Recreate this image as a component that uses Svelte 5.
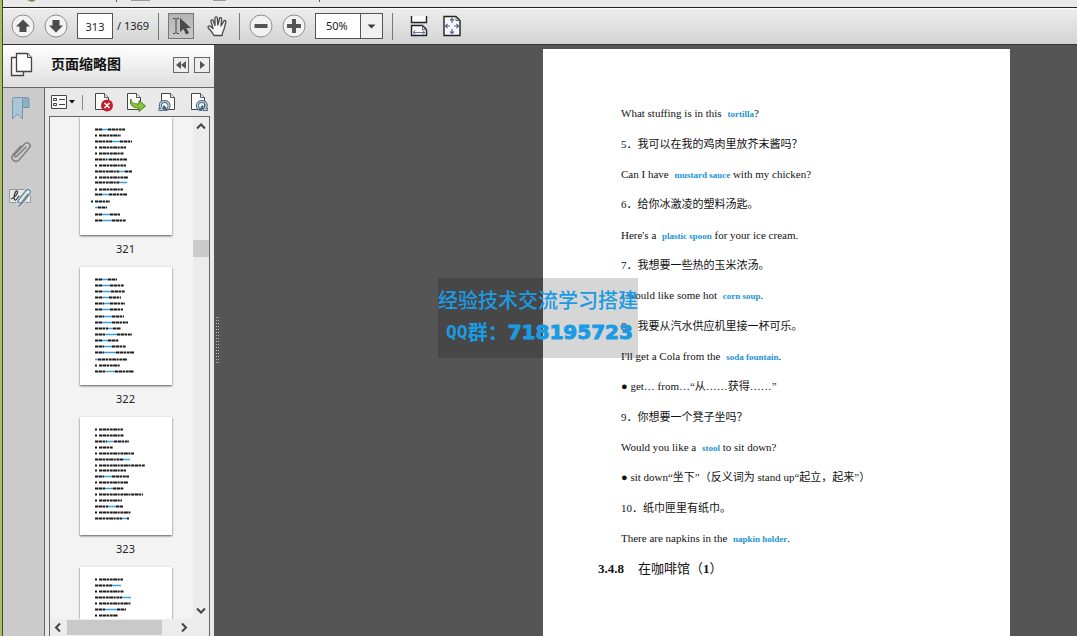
<script>
  const pages = [
    {
      number: 321,
      rows: [
        [12, 15, 22, 28, 45], [18, 15, 0, 0, 41], [24, 15, 32, 40, 52], [30, 15, 0, 0, 46],
        [36, 15, 0, 0, 44], [42, 15, 27, 29, 47], [48, 15, 0, 0, 46], [54, 15, 39, 45, 52],
        [60, 15, 0, 0, 48], [65, 15, 40, 47, 47], [72, 15, 0, 0, 43], [77, 15, 22, 29, 47],
        [84, 11, 0, 0, 30], [90, 15, 15, 18, 27], [97, 15, 22, 30, 40], [103, 15, 22, 32, 46]
      ]
    },
    {
      number: 322,
      rows: [
        [12, 15, 22, 28, 37], [18, 15, 22, 30, 44], [24, 15, 22, 31, 45], [30, 15, 23, 29, 41],
        [36, 15, 24, 30, 45], [42, 15, 22, 30, 43], [49, 15, 24, 32, 44], [55, 15, 22, 32, 48],
        [61, 15, 28, 33, 41], [67, 15, 26, 37, 52], [73, 15, 22, 28, 39], [79, 15, 24, 32, 46],
        [85, 15, 24, 36, 54], [92, 15, 15, 18, 47], [98, 15, 0, 0, 40], [104, 15, 26, 35, 54]
      ]
    },
    {
      number: 323,
      rows: [
        [12, 15, 0, 0, 43], [18, 15, 0, 0, 44], [24, 15, 27, 34, 49], [30, 15, 0, 0, 33],
        [36, 15, 0, 0, 54], [42, 15, 43, 50, 50], [48, 15, 0, 0, 65], [53, 15, 0, 0, 46],
        [59, 15, 24, 32, 49], [65, 15, 0, 0, 48], [71, 15, 25, 33, 44], [77, 15, 0, 0, 63],
        [83, 15, 0, 0, 42], [89, 15, 28, 36, 43], [95, 15, 0, 0, 51], [101, 15, 42, 47, 49]
      ]
    },
    {
      rows: [
        [12, 15, 0, 0, 43], [18, 15, 32, 41, 41], [24, 15, 0, 0, 44], [30, 15, 42, 51, 51],
        [36, 15, 0, 0, 51], [42, 15, 25, 37, 46], [48, 15, 0, 0, 38]
      ]
    }
  ];

  const lines = [
    { a: 'What stuffing is in this ', term: 'tortilla', b: '?' },
    { a: '5．我可以在我的鸡肉里放芥末酱吗？' },
    { a: 'Can I have ', term: 'mustard sauce', b: ' with my chicken?' },
    { a: '6．给你冰激凌的塑料汤匙。' },
    { a: "Here's a ", term: 'plastic spoon', b: ' for your ice cream.' },
    { a: '7．我想要一些热的玉米浓汤。' },
    { a: 'I would like some hot ', term: 'corn soup', b: '.' },
    { a: '8．我要从汽水供应机里接一杯可乐。' },
    { a: "I'll get a Cola from the ", term: 'soda fountain', b: '.' },
    { a: '● get… from…“从……获得……”' },
    { a: '9．你想要一个凳子坐吗？' },
    { a: 'Would you like a ', term: 'stool', b: ' to sit down?' },
    { a: '● sit down“坐下”（反义词为 stand up“起立，起来”）' },
    { a: '10．纸巾匣里有纸巾。' },
    { a: 'There are napkins in the ', term: 'napkin holder', b: '.' }
  ];

  let page = $state('313');
  let zoom = $state('50%');
</script>

{#snippet sheet()}
  <path d="M2.500 1.500h9l4 4v12h-13z" fill="#fdfdfd" stroke="#444" />
  <path d="M11.500 1.500v4h4" fill="#e8e8e8" stroke="#555" />
{/snippet}

<div class="app">
  <div class="strip">
    <svg width="360" height="7" aria-hidden="true">
      <path d="M24 0h9l-4 2z" fill="#8a7a55" />
      <path d="M113.500 0v2M316.500 0v2" stroke="#555" />
      <path d="M128 0h19M210 0h13" stroke="#999" stroke-width="2" />
    </svg>
  </div>

  <header class="toolbar">
    <button aria-label="Previous page">
      <svg width="24" height="24" viewBox="0 0 24 24">
        <circle cx="12" cy="12" r="11" fill="#f2f2f2" stroke="#8d8d8d" />
        <path d="M12 5.500l7 7h-3.500v5.500h-7v-5.500H5z" fill="#4b4b4b" />
      </svg>
    </button>
    <button aria-label="Next page">
      <svg width="24" height="24" viewBox="0 0 24 24">
        <circle cx="12" cy="12" r="11" fill="#f2f2f2" stroke="#8d8d8d" />
        <path d="M12 18.500l7-7h-3.500V6h-7v5.500H5z" fill="#4b4b4b" />
      </svg>
    </button>
    <label class="page-no"><input aria-label="Page number" bind:value={page} /><span>/ 1369</span></label>
    <i class="sep"></i>
    <button class="active" aria-label="Select">
      <svg width="24" height="24" viewBox="0 0 24 24">
        <path d="M4 4.500h2l1 1 1-1h2M7 5v14M4 19.500h2l1-1 1 1h2" fill="none" stroke="#444" />
        <path d="M11 4v14l3.500-3 2.500 5.500 3-1.500-2.500-5H22z" fill="#4a4a4a" />
      </svg>
    </button>
    <button class="tool" aria-label="Hand">
      <svg width="24" height="24" viewBox="0 0 24 24">
        <path d="M9 21.500C7.500 18 5 16 3.300 14c-1-1.500.7-2.700 2-1.700L8 14.500 6 7.500c-.4-1.800 1.700-2.300 2.200-.7L10 11.500V4.200c0-1.700 2.200-1.700 2.300 0l.5 7L14.500 4.500c.4-1.500 2.300-1.100 2.100.5L16 12l2.800-4.800c.8-1.300 2.500-.4 2 1C19.500 12 20 14 18 17.500c-.7 1.400-.8 2.500-.8 4z" fill="#f6f6f6" stroke="#4a4a4a" stroke-width="1.300" stroke-linejoin="round" />
      </svg>
    </button>
    <i class="sep"></i>
    <button aria-label="Zoom out">
      <svg width="24" height="24" viewBox="0 0 24 24">
        <circle cx="12" cy="12" r="11" fill="#f2f2f2" stroke="#8d8d8d" />
        <path d="M5.500 10h13v4h-13z" fill="#555" />
      </svg>
    </button>
    <button aria-label="Zoom in">
      <svg width="24" height="24" viewBox="0 0 24 24">
        <circle cx="12" cy="12" r="11" fill="#f2f2f2" stroke="#8d8d8d" />
        <path d="M10 5h4v5h5v4h-5v5h-4v-5H5v-4h5z" fill="#555" />
      </svg>
    </button>
    <div class="zoom">
      <select aria-label="Zoom level" bind:value={zoom}>
        <option>50%</option>
        <option>100%</option>
      </select>
      <svg width="22" height="24" viewBox="0 0 22 24" aria-hidden="true">
        <path d="M0 0h22v24H0z" fill="#f1f1f1" />
        <path d="M.5 0v24" stroke="#555" />
        <path d="M7.500 10.500h8l-4 4z" fill="#3c3c3c" />
      </svg>
    </div>
    <i class="sep"></i>
    <div class="pair">
      <button class="wide" aria-label="Fit width">
        <svg width="20" height="22" viewBox="0 0 20 22">
          <path d="M2.500 1v6.500h15V1" fill="#fafafa" stroke="#222" stroke-width="1.400" />
          <path d="M2.500 20.500v-10h11l4 4v6z" fill="#f5f7fb" stroke="#222" stroke-width="1.400" />
          <path d="M13.500 10.500v4h4" fill="none" stroke="#666" />
          <path d="M4 17.500h12M6.500 15.500l-2.500 2 2.500 2M13.500 15.500l2.500 2-2.500 2" fill="none" stroke="#6d7595" />
        </svg>
      </button>
      <button class="wide" aria-label="Fit page">
        <svg width="20" height="22" viewBox="0 0 20 22">
          <path d="M2 1.500h12l4 4v15H2z" fill="#f5f7fb" stroke="#222" stroke-width="1.400" />
          <path d="M14 1.500v4h4" fill="none" stroke="#666" />
          <path d="M10 4v4M10 14v4M4 11h4M12 11h4M8 5.500l2-2 2 2M8 16.500l2 2 2-2M5.500 9l-2 2 2 2M14.500 9l2 2-2 2" fill="none" stroke="#59658f" stroke-width="1.200" />
        </svg>
      </button>
    </div>
  </header>

  <div class="main">
    <aside>
      <div class="panel-head">
        <svg width="24" height="26" viewBox="0 0 24 26" aria-hidden="true">
          <path d="M1.500 5.500h12v18h-12z" fill="#f6f6f6" stroke="#444" stroke-width="1.300" />
          <path d="M6.500 1.500h11l4 4v14h-15z" fill="#fff" stroke="#444" stroke-width="1.300" />
          <path d="M17.500 1.500v4h4" fill="#ddd" stroke="#444" />
        </svg>
        <h2>页面缩略图</h2>
        <button class="box" aria-label="Collapse">
          <svg width="14" height="14" viewBox="0 0 14 14"><path d="M7 3v8L2 7zM12 3v8L7 7z" fill="#555" /></svg>
        </button>
        <button class="box" aria-label="Expand">
          <svg width="14" height="14" viewBox="0 0 14 14"><path d="M5 3v8l5-4z" fill="#555" /></svg>
        </button>
      </div>
      <div class="panel-body">
        <nav>
          <button aria-label="Bookmarks">
            <svg width="24" height="26" viewBox="0 0 24 26">
              <path d="M13 2.500h5.500c1 0 1.500 1 1.500 2v8h-6" fill="#8fb0c4" stroke="#6f93aa" />
              <path d="M3.500 24V4c0-1 .6-1.500 1.500-1.500h10c-1 0-1.500 1-1.500 2V24l-5-5z" fill="#a9c6d8" stroke="#7396ab" />
            </svg>
          </button>
          <button aria-label="Attachments">
            <svg width="24" height="26" viewBox="0 0 24 26">
              <path d="M17 8l-9 9c-1.500 1.700-3.500.2-2.200-1.500L15.500 5c3-3 7.500.3 4.700 4L10.500 20.500c-4 4.500-10-.3-6.300-5L12 7" fill="none" stroke="#808080" stroke-width="1.500" stroke-linecap="round" />
            </svg>
          </button>
          <button aria-label="Signatures">
            <svg width="26" height="26" viewBox="0 0 26 26">
              <path d="M1.500 6.500h21v13h-21z" fill="#e4e8eb" stroke="#999" />
              <path d="M3 16c4-1 8-7 6-8s-4 8-2 9 3-4 4-4 0 3 2 2" fill="none" stroke="#333" stroke-width="1.200" />
              <path d="M20 11l-6 8c-2 2.500-5 .5-3.500-2L18 7.500c2-2.500 6 0 4.300 2.500l-7 9c-1.500 2-3.500 4-5.300 4.500" fill="none" stroke="#e8f0f5" stroke-width="3" />
              <path d="M20 11l-6 8c-2 2.500-5 .5-3.500-2L18 7.500c2-2.500 6 0 4.300 2.500l-7 9c-1.500 2-3.500 4-5.300 4.500" fill="none" stroke="#748997" stroke-width="1.500" />
            </svg>
          </button>
        </nav>
        <section>
          <div class="tools">
            <div class="options">
              <button aria-label="Options">
                <svg width="26" height="20" viewBox="0 0 26 20">
                  <path d="M2.500 3.500h15v13h-15z" fill="#fafafa" stroke="#444" />
                  <path d="M4.500 6.500h3v2h-3zM4.500 11.500h3v2h-3zM10 7.500h6M10 12.500h6" fill="none" stroke="#444" />
                  <path d="M20 8h6l-3 3.500z" fill="#111" />
                </svg>
              </button>
              <i class="sep small"></i>
            </div>
            <button aria-label="Delete page">
              <svg width="22" height="20" viewBox="0 0 22 20">
                {@render sheet()}
                <circle cx="14" cy="13.500" r="6" fill="#c4202b" />
                <path d="M11.500 11l5 5M16.500 11l-5 5" stroke="#fff" stroke-width="1.600" />
              </svg>
            </button>
            <button aria-label="Extract page">
              <svg width="22" height="20" viewBox="0 0 22 20">
                {@render sheet()}
                <path d="M6 7c0 4 3 5 8 5V8.500l6.500 5.500-6.500 5.500V16C8 16 4 13 6 7z" fill="#8cc63e" stroke="#4d7f1c" />
              </svg>
            </button>
            <button aria-label="Rotate left">
              <svg width="22" height="20" viewBox="0 0 22 20">
                <g transform="translate(2 0)">{@render sheet()}</g>
                <path d="M1.500 17.500h5M5 17.500c-3-3-2-8 2.500-8s6 5 3 7.500c-2.500 1.500-4.500-1-2.500-3" fill="none" stroke="#49677f" stroke-width="3" />
                <path d="M2 17.500h4M5 17c-3-3-2-7.500 2.500-7.500s6 5 3 7.500" fill="none" stroke="#c0d3e0" stroke-width="1.200" />
              </svg>
            </button>
            <button aria-label="Rotate right">
              <svg width="22" height="20" viewBox="0 0 22 20">
                {@render sheet()}
                <path d="M19 17.500h-5M15.500 17.500c3-3 2-8-2.500-8s-6 5-3 7.500c2.500 1.500 4.500-1 2.500-3" fill="none" stroke="#49677f" stroke-width="3" />
                <path d="M18.500 17.500h-4M15.500 17c3-3 2-7.500-2.500-7.500s-6 5-3 7.500" fill="none" stroke="#c0d3e0" stroke-width="1.200" />
              </svg>
            </button>
          </div>
          <div class="list">
            <div class="rows">
              <ol class="thumbs">
                {#each pages as p}
                  <li>
                    <svg width="92" height="118" viewBox="0 0 92 118" aria-hidden="true">
                      {#each p.rows as [y, x0, b0, b1, x1]}
                        {#if b1}
                          <path class="ink" d="M{x0} {y}.500H{b0}M{b1} {y}.500H{x1}" />
                          <path class="blue" d="M{b0} {y}.500H{b1}" />
                        {:else}
                          <path class="ink" d="M{x0} {y}.500h2M{x0 + 4} {y}.500H{x1}" />
                        {/if}
                      {/each}
                    </svg>
                    {#if p.number}<span>{p.number}</span>{/if}
                  </li>
                {/each}
              </ol>
              <div class="vbar">
                <svg width="16" height="18" viewBox="0 0 16 18"><path d="M4 11.500l4-4 4 4" /></svg>
                <i class="before"></i><i class="grab"></i><i class="after"></i>
                <svg width="16" height="18" viewBox="0 0 16 18"><path d="M4 7.500l4 4 4-4" /></svg>
              </div>
            </div>
            <div class="hbar">
              <svg width="17" height="16" viewBox="0 0 17 16"><path d="M10 4.500l-4 4 4 4" /></svg>
              <i class="grab"></i>
              <svg width="17" height="16" viewBox="0 0 17 16"><path d="M6 4.500l4 4-4 4" /></svg>
            </div>
          </div>
        </section>
      </div>
    </aside>

    <main>
      <i class="grip"></i>
      <article>
        <div class="text">
          {#each lines as l}
            <p>{l.a}{#if l.term}<b>{l.term}</b>{l.b}{/if}</p>
          {/each}
        </div>
        <h3><strong>3.4.8</strong><span>在咖啡馆（<strong>1</strong>）</span></h3>
      </article>
    </main>
  </div>

  <div class="mark">
    <div class="kai">经验技术交流学习搭建</div>
    <div class="qq"><span class="latin">QQ</span>群：<strong>718195723</strong></div>
  </div>
</div>

<style>
  :global(body) { margin: 0; }
  * { box-sizing: border-box; }
  .app {
    position: relative;
    display: flex;
    flex-direction: column;
    height: 100vh;
    overflow: hidden;
    border-left: 2px solid #a3c257;
    box-shadow: inset 1px 0 #444;
    padding-left: 1px;
    background: #555;
    font: 11px/16px "Noto Sans", "Noto Sans CJK SC", sans-serif;
    color: #222;
  }
  svg { display: block; }
  button {
    display: grid;
    place-items: center;
    padding: 0;
    border: 0;
    background: none;
  }
  .strip {
    flex: none;
    height: 8px;
    background: #e9e9e9;
    border-bottom: 1px solid #222;
  }
  .toolbar {
    flex: none;
    display: flex;
    align-items: center;
    gap: 9px;
    height: 37px;
    padding: 0 8px 1px;
    background: linear-gradient(#ececec, #d4d4d4);
    border-top: 1px solid #fafafa;
    border-bottom: 1px solid #333;
  }
  .sep { width: 1px; height: 27px; background: #777; }
  .page-no { display: flex; align-items: center; gap: 4px; width: 72px; white-space: nowrap; }
  .page-no input {
    width: 36px;
    height: 26px;
    padding: 0;
    border: 1px solid #555;
    background: #fff;
    font: inherit;
    color: inherit;
    text-align: center;
  }
  .active { width: 26px; height: 26px; border: 1px solid #777; background: linear-gradient(#b4b4b4, #c8c8c8); }
  .tool { width: 27px; height: 26px; }
  .zoom {
    display: grid;
    width: 68px;
    height: 26px;
    border: 1px solid #555;
    background: #fff;
  }
  .zoom > * { grid-area: 1 / 1; }
  .zoom select {
    appearance: none;
    padding: 0 0 0 10px;
    border: 0;
    background: none;
    font: inherit;
    color: inherit;
  }
  .zoom svg { justify-self: end; pointer-events: none; }
  .pair { display: flex; }
  .wide { width: 33px; height: 26px; }

  .main { flex: 1; min-height: 0; display: flex; }
  aside { width: 211px; flex: none; display: flex; flex-direction: column; background: #e9e9e9; }
  .panel-head {
    flex: none;
    display: flex;
    align-items: center;
    gap: 5px;
    height: 43px;
    padding: 0 4px 2px 7px;
    background: linear-gradient(#fff, #dedede);
    border-bottom: 1px solid #666;
  }
  h2 {
    flex: 1;
    margin: 0;
    padding: 0 0 4px 12px;
    font: bold 14px/20px "Noto Sans CJK SC", sans-serif;
    color: #111;
  }
  .box { width: 16px; height: 16px; border: 1px solid #666; background: #eee; }
  .panel-body { flex: 1; min-height: 0; display: flex; }
  nav {
    flex: none;
    display: flex;
    flex-direction: column;
    align-items: center;
    gap: 18px;
    width: 42px;
    padding: 7px 6px 0 0;
    background: #cbcbcb;
    border-right: 1px solid #666;
  }
  section { flex: 1; min-width: 0; display: flex; flex-direction: column; padding: 0 4px; }
  .tools { flex: none; display: flex; align-items: center; gap: 10px; height: 28px; }
  .options { display: flex; align-items: center; gap: 7px; }
  .small { height: 15px; background: #888; }
  .list {
    flex: 1;
    min-height: 0;
    display: flex;
    flex-direction: column;
    border: solid #666;
    border-width: 1px 1px 0;
    background: #f3f3f3;
  }
  .rows { flex: 1; min-height: 0; display: flex; overflow: hidden; }
  .thumbs {
    flex: 1;
    display: flex;
    flex-direction: column;
    align-items: center;
    margin: 0;
    padding: 0 0 0 8px;
    list-style: none;
  }
  .thumbs li { flex: none; display: flex; flex-direction: column; height: 150px; text-align: center; }
  .thumbs svg { background: #fff; box-shadow: 0 1px 2px #555; }
  .thumbs span { padding-top: 6px; }
  .ink { fill: none; stroke: #1c1c1c; stroke-width: 1.800; stroke-dasharray: 3 0.5 4 0.5 2 0.7; }
  .blue { fill: none; stroke: #3b9edb; stroke-width: 1.500; }
  .vbar { display: flex; flex-direction: column; width: 16px; background: #ececec; }
  .vbar path, .hbar path { fill: none; stroke: #444; stroke-width: 2; }
  .vbar .grab { height: 17px; background: #cacaca; }
  .before { flex: 106; }
  .after { flex: 346; }
  .hbar { flex: none; display: flex; height: 17px; padding-right: 16px; background: #ececec; }
  .hbar .grab { flex: 1; height: 15px; margin: 1px 14px 0 0; background: #c9c9c9; }

  main { flex: 1; min-width: 0; display: flex; background: #555; }
  .grip {
    align-self: center;
    width: 4px;
    height: 48px;
    margin: 0 1px;
    background: conic-gradient(#bbb 25%, transparent 0) 0 0 / 2px 3px;
  }
  main::before { content: ""; order: 1; flex: 323; }
  article { order: 2; flex: 0 0 467px; margin-top: 4px; padding: 49px 55px 0; background: #fff; }
  main::after { content: ""; order: 3; flex: 67; }
  .text { padding-left: 23px; }
  p, h3 {
    margin: 0;
    font: 11px/30px "Liberation Serif", "Noto Sans CJK SC", serif;
    color: #111;
    white-space: nowrap;
    text-spacing-trim: space-all;
  }
  p { height: 30px; }
  p:nth-child(3n + 1) { height: 31px; }
  p b { padding-left: 3px; font-size: 9px; color: #1a94d6; }
  h3 { display: flex; gap: 14px; padding-top: 1px; font-size: 13px; }

  .mark {
    position: absolute;
    left: 436px;
    top: 278px;
    width: 200px;
    height: 80px;
    padding-top: 6px;
    background: rgba(0, 0, 0, 0.16);
    color: #1b9be3;
    font: 20px/32px "Noto Sans CJK SC", sans-serif;
    white-space: nowrap;
  }
  .kai { font-weight: 500; }
  .qq { padding-left: 8px; display: flex; font-weight: bold; }
  .latin { font-family: "DejaVu Sans Mono", monospace; font-size: 18px; }
  .qq strong { font-family: "DejaVu Sans", sans-serif; -webkit-text-stroke: 1px #1b9be3; }
</style>
